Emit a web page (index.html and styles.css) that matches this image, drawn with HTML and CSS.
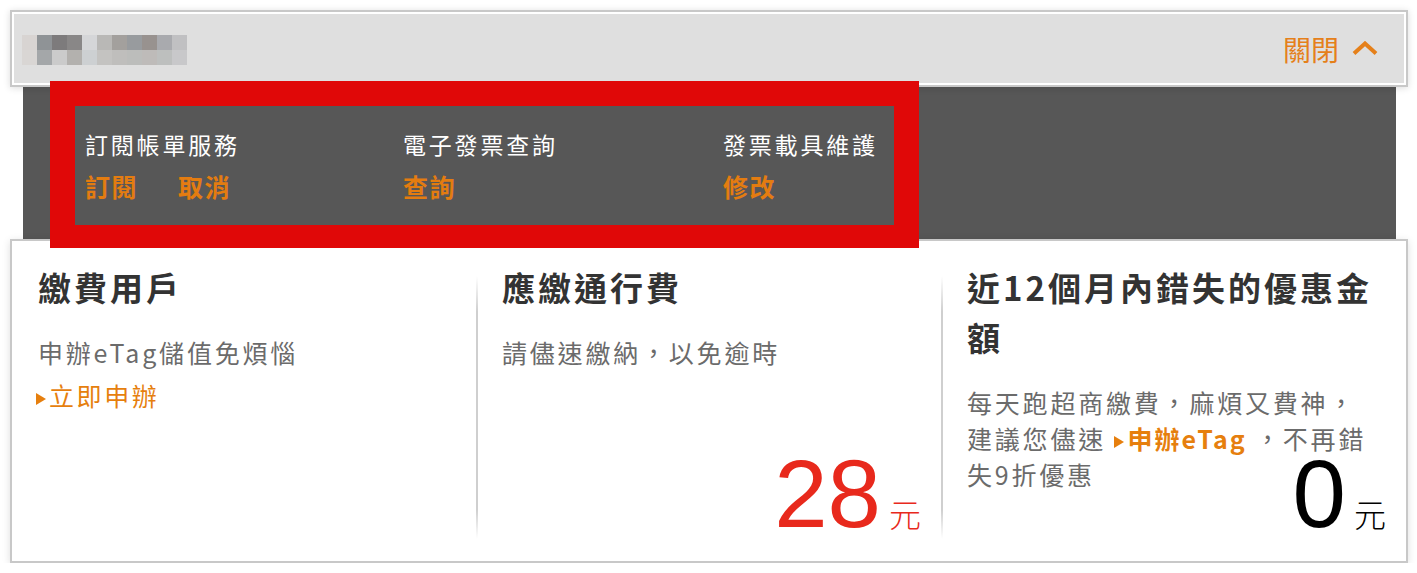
FILE: index.html
```html
<!DOCTYPE html>
<html lang="zh-Hant">
<head>
<meta charset="utf-8">
<title>帳單</title>
<link rel="stylesheet" href="styles.css">
</head>
<body>
<div class="page">
  <header class="topbar">
    <div class="mosaic" aria-label="用戶名稱">
      <span class="px c1"></span><span class="px c2"></span><span class="px c3"></span><span class="px c4"></span><span class="px c5"></span><span class="px c6"></span><span class="px c7"></span><span class="px c8"></span><span class="px c9"></span><span class="px c10"></span><span class="px c11"></span>
      <span class="px d1"></span><span class="px d2"></span><span class="px d3"></span><span class="px d4"></span><span class="px d5"></span><span class="px d6"></span><span class="px d7"></span><span class="px d8"></span><span class="px d9"></span><span class="px d10"></span><span class="px d11"></span>
    </div>
    <button class="close">關閉
      <svg class="chev" width="26" height="14" viewBox="0 0 26 14"><polyline points="2,12.5 13,2.5 24,12.5" fill="none" stroke="#e5801a" stroke-width="4"/></svg>
    </button>
  </header>

  <section class="services">
    <div class="svc">
      <div class="svc-label">訂閱帳單服務</div>
      <div class="svc-links"><a class="svc-link gap">訂閱</a><a class="svc-link">取消</a></div>
    </div>
    <div class="svc">
      <div class="svc-label">電子發票查詢</div>
      <div class="svc-links"><a class="svc-link">查詢</a></div>
    </div>
    <div class="svc">
      <div class="svc-label">發票載具維護</div>
      <div class="svc-links"><a class="svc-link">修改</a></div>
    </div>
  </section>

  <section class="cards">
    <article class="card">
      <div class="card-body">
        <h2 class="card-title">繳費用戶</h2>
        <p class="card-text">申辦eTag儲值免煩惱</p>
        <a class="more"><span class="tri"></span>立即申辦</a>
      </div>
    </article>
    <article class="card divided">
      <div class="card-body">
        <h2 class="card-title">應繳通行費</h2>
        <p class="card-text">請儘速繳納，以免逾時</p>
      </div>
      <div class="amount red">28<span class="unit">元</span></div>
    </article>
    <article class="card divided">
      <div class="card-body narrow">
        <h2 class="card-title">近12個月內錯失的優惠金額</h2>
        <p class="card-text">每天跑超商繳費，麻煩又費神，建議您儘速 <a class="inline-link"><span class="tri"></span>申辦eTag</a> ，不再錯失9折優惠</p>
      </div>
      <div class="amount">0<span class="unit">元</span></div>
    </article>
  </section>

  <div class="annotation" aria-hidden="true"></div>
</div>
</body>
</html>
```

FILE: styles.css
```css
* { box-sizing: border-box; }

html, body {
  margin: 0;
  background: #ffffff;
}

body {
  font-family: "Noto Sans CJK TC", "Noto Sans", sans-serif;
  color: #333;
}

.page {
  position: relative;
  width: 1398px;
  margin: 10px 0 0 10px;
  display: flex;
  flex-direction: column;
}

/* ---------- top bar ---------- */
.topbar {
  height: 77px;
  border: 2px solid #c8c8c8;
  background: #dfdfdf;
  box-shadow: inset 0 0 0 2px #ffffff, 0 1px 7px rgba(0, 0, 0, 0.14);
  display: flex;
  align-items: center;
  justify-content: space-between;
  padding: 0 28px 0 10px;
  position: relative;
  z-index: 1;
}

.mosaic {
  display: grid;
  grid-template-columns: repeat(11, 15px);
  grid-auto-rows: 15px;
  margin-top: 3px;
}

.px { display: block; }
.c1 { background: #d8d4d2; } .c2 { background: #8f9396; } .c3 { background: #7d7b7c; }
.c4 { background: #898787; } .c5 { background: #d5d6d8; } .c6 { background: #b9b8b6; }
.c7 { background: #a3a09d; } .c8 { background: #989b9e; } .c9 { background: #98928f; }
.c10 { background: #a9aaae; } .c11 { background: #c0c0c2; }
.d1 { background: #d9d6d4; } .d2 { background: #a4a7a9; } .d3 { background: #cbcbcb; }
.d4 { background: #b3b1ae; } .d5 { background: #cdd0d2; } .d6 { background: #c4c3c1; }
.d7 { background: #bfbebc; } .d8 { background: #bcbdbb; } .d9 { background: #bebbb9; }
.d10 { background: #bdbfbe; } .d11 { background: #c8c8ca; }

.close {
  border: 0;
  background: none;
  padding: 0;
  font-family: "Noto Sans CJK TC", sans-serif;
  font-size: 28px;
  line-height: 36px;
  color: #e5801a;
  display: flex;
  align-items: center;
  gap: 13px;
  cursor: pointer;
}

.chev { display: block; margin-top: -2px; }

/* ---------- services panel ---------- */
.services {
  margin: 0 12px 0 13px;
  height: 152px;
  background: #575757;
  display: grid;
  grid-template-columns: 318px 320px 1fr;
  padding: 41px 0 0 62px;
}

.svc-label {
  color: #ffffff;
  font-size: 23px;
  line-height: 32px;
  letter-spacing: 2.8px;
}

.svc-links {
  margin-top: 8px;
  display: flex;
}

.svc-link {
  color: #e47c10;
  font-size: 25px;
  line-height: 36px;
  font-weight: 700;
  letter-spacing: 1.5px;
}

.svc-link.gap { margin-right: 40px; }

/* ---------- cards ---------- */
.cards {
  height: 324px;
  border: 2px solid #c8c8c8;
  background: #ffffff;
  box-shadow: 0 2px 8px rgba(0, 0, 0, 0.13);
  display: grid;
  grid-template-columns: 464px 465px 1fr;
}

.card {
  display: grid;
  padding: 21px 20px 19px 26px;
}

.card.divided {
  background-image: linear-gradient(to bottom,
    rgba(200, 200, 200, 0) 0,
    rgba(200, 200, 200, 0) 11%,
    #cfcfcf 22%,
    #cfcfcf 84%,
    rgba(200, 200, 200, 0) 93%);
  background-repeat: no-repeat;
  background-size: 2px 100%;
  background-position: 0 0;
}

.card-body,
.amount {
  grid-area: 1 / 1;
}

.card-body.narrow { padding-right: 9px; }

.card-title {
  margin: 0;
  font-size: 33px;
  line-height: 50px;
  font-weight: 700;
  letter-spacing: 3px;
  color: #333333;
}

.card-text {
  margin: 22px 0 0;
  font-size: 25px;
  line-height: 36px;
  letter-spacing: 2.8px;
  color: #6b6b6b;
}

.more {
  display: block;
  margin-top: 7px;
  margin-left: -2px;
  font-size: 25px;
  line-height: 36px;
  letter-spacing: 2.6px;
  color: #e67f0e;
}

.inline-link {
  color: #e67f0e;
  font-weight: 700;
  letter-spacing: 2px;
}

.tri {
  display: inline-block;
  width: 0;
  height: 0;
  border-left: 10px solid #e67f0e;
  border-top: 6px solid transparent;
  border-bottom: 6px solid transparent;
  margin-right: 3px;
  vertical-align: 1px;
}

.amount {
  justify-self: end;
  align-self: end;
  font-family: "Liberation Sans", Arial, sans-serif;
  font-size: 96px;
  line-height: 96px;
  color: #000000;
  white-space: nowrap;
}

.amount.red { color: #e8291c; }

.unit {
  font-family: "Noto Sans CJK TC", sans-serif;
  font-size: 32px;
  line-height: 32px;
  font-weight: 300;
  margin-left: 8px;
}

/* ---------- annotation overlay ---------- */
.annotation {
  position: absolute;
  left: 40px;
  top: 71px;
  width: 869px;
  height: 167px;
  border: 25px solid #e00808;
  border-bottom-width: 23px;
  z-index: 2;
  pointer-events: none;
}
```
